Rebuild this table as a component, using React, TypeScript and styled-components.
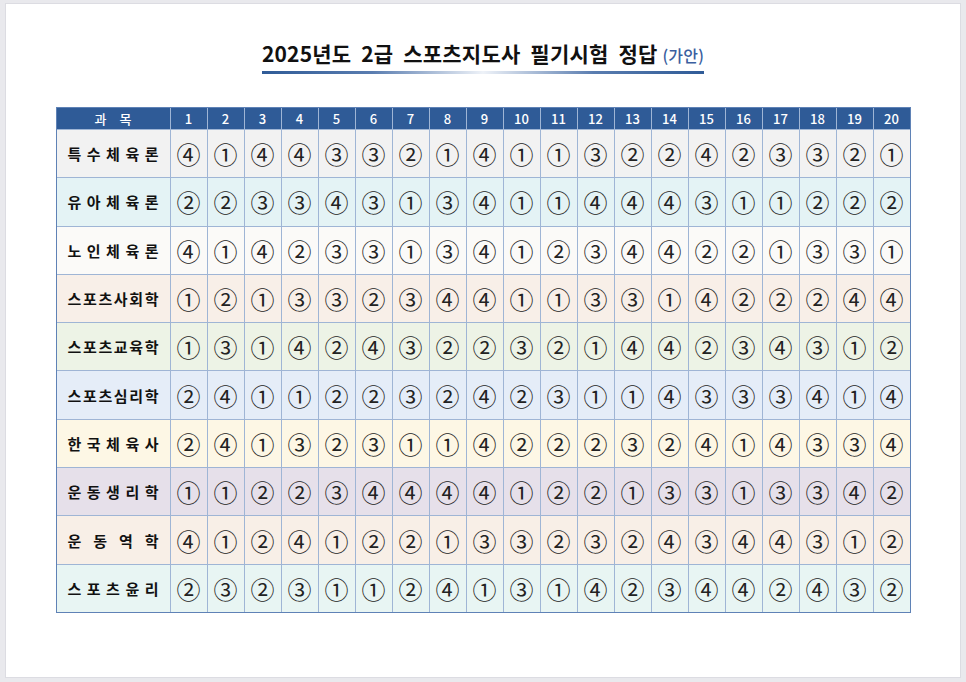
import React from 'react';
import styled, { createGlobalStyle } from 'styled-components';

const GlobalStyle = createGlobalStyle`
  html, body {
    margin: 0;
    padding: 0;
    background: #e9e9ed;
    font-family: 'Noto Sans CJK KR', 'Noto Sans', sans-serif;
  }
`;

const Sheet = styled.div`
  box-sizing: border-box;
  width: 956px;
  height: 675px;
  margin: 3px 0 0 5px;
  background: #ffffff;
  border: 1px solid #dcdce2;
  padding-top: 35px;
  display: flex;
  flex-direction: column;
  align-items: center;
`;

const TitleBlock = styled.div`
  display: inline-flex;
  flex-direction: column;
  align-items: stretch;
`;

const Title = styled.h1`
  margin: 0;
  font-size: 21px;
  font-weight: 700;
  line-height: 28px;
  color: #111;
  white-space: pre;
  letter-spacing: 0.2px;
`;

const Draft = styled.span`
  font-size: 16px;
  font-weight: 500;
  color: #3b5fa0;
  margin-left: 5px;
`;

const Underline = styled.div`
  height: 3px;
  margin-top: 2px;
  background: linear-gradient(
    90deg,
    #2f5b97 0%,
    #5a7db0 25%,
    #eef2f8 50%,
    #5a7db0 75%,
    #2f5b97 100%
  );
`;

const Grid = styled.div`
  box-sizing: border-box;
  width: 855px;
  margin-top: 33px;
  display: grid;
  grid-template-columns: 113px repeat(20, 1fr);
  grid-template-rows: 21px repeat(10, 47.3px);
  gap: 1px;
  background: #9fb5d5;
  border: 1px solid #5f82b6;
`;

const HeadCell = styled.div`
  background: #2f5b97;
  color: #ffffff;
  font-size: 13px;
  font-weight: 500;
  display: flex;
  align-items: center;
  justify-content: center;
  word-spacing: 10px;
`;

const Cell = styled.div<{ $bg: string }>`
  background: ${(p) => p.$bg};
  display: flex;
  align-items: center;
  justify-content: center;
  font-size: 24px;
  color: #222;
`;

const Label = styled.div`
  width: 91px;
  display: flex;
  justify-content: space-between;
  font-size: 15px;
  font-weight: 700;
  color: #111;
`;

const marks = ['', '①', '②', '③', '④'];

const rows: { name: string; bg: string; ans: string }[] = [
  { name: '특수체육론', bg: '#f2f2f2', ans: '41443321411322423321' },
  { name: '유아체육론', bg: '#e4f3f5', ans: '22334313411444311222' },
  { name: '노인체육론', bg: '#fbfaf8', ans: '41423313412344221331' },
  { name: '스포츠사회학', bg: '#f8efe8', ans: '12133234411331422244' },
  { name: '스포츠교육학', bg: '#edf3e6', ans: '13142432232144234312' },
  { name: '스포츠심리학', bg: '#e5edf8', ans: '24112232423114333414' },
  { name: '한국체육사', bg: '#fdf7e5', ans: '24132311422232414334' },
  { name: '운동생리학', bg: '#e6e0ea', ans: '11223444412213313342' },
  { name: '운동역학', bg: '#f8efe7', ans: '41241221332324344312' },
  { name: '스포츠윤리', bg: '#e8f5f3', ans: '23231124131423442432' },
];

const App: React.FC = () => {
  return (
    <>
      <GlobalStyle />
      <Sheet>
        <TitleBlock>
          <Title>
            2025년도  2급  스포츠지도사  필기시험  정답<Draft>(가안)</Draft>
          </Title>
          <Underline />
        </TitleBlock>
        <Grid>
          <HeadCell>과 목</HeadCell>
          {Array.from({ length: 20 }, (_, i) => (
            <HeadCell key={i}>{i + 1}</HeadCell>
          ))}
          {rows.map((r) => (
            <React.Fragment key={r.name}>
              <Cell $bg={r.bg}>
                <Label>
                  {r.name.split('').map((ch, i) => (
                    <span key={i}>{ch}</span>
                  ))}
                </Label>
              </Cell>
              {r.ans.split('').map((a, i) => (
                <Cell key={i} $bg={r.bg}>
                  {marks[Number(a)]}
                </Cell>
              ))}
            </React.Fragment>
          ))}
        </Grid>
      </Sheet>
    </>
  );
};

export default App;
